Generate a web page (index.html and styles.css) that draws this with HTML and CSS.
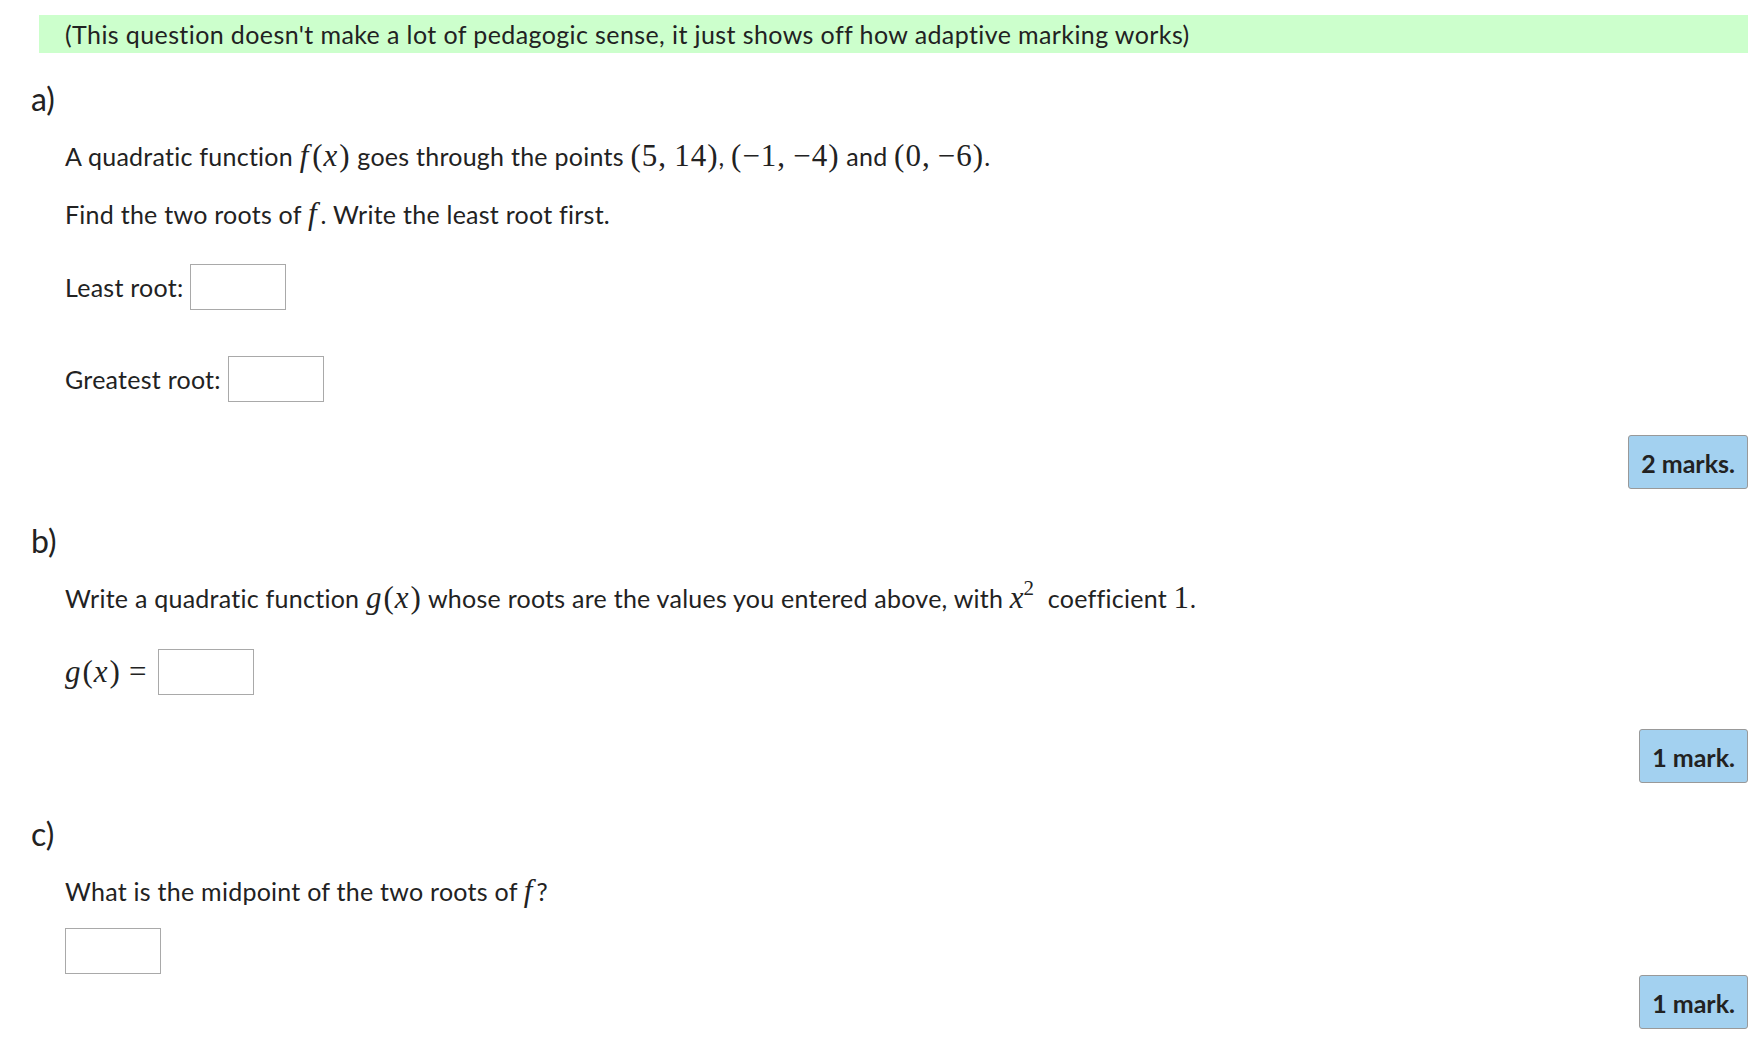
FILE: index.html
```html
<!DOCTYPE html>
<html>
<head>
<meta charset="utf-8">
<link rel="stylesheet" href="styles.css">
</head>
<body>
<div class="page">
  <div class="intro">(This question doesn't make a lot of pedagogic sense, it just shows off how adaptive marking works)</div>

  <section class="part part-a">
    <div class="part-label">a)</div>
    <div class="content">
      <p class="line">A quadratic function <span class="m"><i class="f">f</i>(<i>x</i>)</span> goes through the points <span class="m">(5,&#8201;14)</span>, <span class="m">(−1,&#8201;−4)</span> and <span class="m">(0,&#8201;−6)</span>.</p>
      <p class="line l2">Find the two roots of <span class="m"><i class="f">f</i></span>. Write the least root first.</p>
      <div class="answer first">Least root: <span class="box"></span></div>
      <div class="answer second">Greatest root: <span class="box"></span></div>
    </div>
    <div class="marks-row"><span class="marks">2 marks.</span></div>
  </section>

  <section class="part part-b">
    <div class="part-label">b)</div>
    <div class="content">
      <p class="line">Write a quadratic function <span class="m"><i>g</i>(<i>x</i>)</span> whose roots are the values you entered above, with <span class="m"><i class="base">x</i><sup>2</sup></span> coefficient <span class="m">1</span>.</p>
      <div class="answer first"><span class="m"><i>g</i>(<i>x</i>)<span class="eq">=</span></span><span class="box"></span></div>
    </div>
    <div class="marks-row"><span class="marks">1 mark.</span></div>
  </section>

  <section class="part part-c">
    <div class="part-label">c)</div>
    <div class="content">
      <p class="line">What is the midpoint of the two roots of <span class="m"><i class="f">f</i></span>?</p>
      <div class="answer c-box"><span class="box"></span></div>
    </div>
    <div class="marks-row tight"><span class="marks">1 mark.</span></div>
  </section>
</div>
</body>
</html>
```

FILE: styles.css
```css
html, body {
  margin: 0;
  padding: 0;
  background: #ffffff;
}
body {
  font-family: "Lato", "Open Sans", sans-serif;
  color: #222222;
  font-size: 25px;
  letter-spacing: 0.25px;
}
.page {
  padding: 15px 15px 0 31px;
}
.intro {
  margin-left: 8px;
  height: 38px;
  line-height: 38px;
  background: #ccffcc;
  padding-left: 26px;
  white-space: nowrap;
  letter-spacing: 0.4px;
}
.part-label {
  font-size: 32px;
  line-height: 36px;
  height: 36px;
  letter-spacing: 0;
}
.part-a .part-label { margin-top: 28px; }
.part-b .part-label { margin-top: 34px; }
.part-c .part-label { margin-top: 33px; }
.content {
  padding-left: 34px;
}
.line {
  margin: 21px 0 0 0;
  line-height: 36px;
  height: 36px;
  white-space: nowrap;
}
.line.l2 { margin-top: 22px; }
.m {
  font-family: "Liberation Serif", "DejaVu Serif", serif;
  font-size: 31px;
  letter-spacing: 1px;
}
.m i { font-style: italic; margin-right: 1px; }
.m i.f { margin-right: 3px; }
.m i.base { margin-right: 0; letter-spacing: 0; }
.m sup {
  font-size: 21px;
  line-height: 0;
  vertical-align: 13px;
  margin-right: 6px;
}
.answer {
  display: flex;
  align-items: center;
  gap: 7px;
  height: 46px;
  white-space: nowrap;
}
.answer.first { margin-top: 32px; }
.part-b .answer.first { margin-top: 33px; }
.answer.second { margin-top: 46px; }
.answer.c-box { margin-top: 19px; }
.box {
  display: inline-block;
  width: 94px;
  height: 44px;
  border: 1px solid #a9a9a9;
  background: #fff;
}
.eq { margin: 0 4px 0 8px; }
.marks-row {
  display: flex;
  justify-content: flex-end;
  margin-top: 33px;
}
.part-b .marks-row { margin-top: 34px; }
.marks-row.tight { margin-top: 1px; }
.marks {
  display: inline-block;
  height: 52px;
  line-height: 54px;
  padding: 0 12px;
  background: #a3d1f0;
  border: 1px solid #999999;
  border-radius: 3px;
  font-size: 25px;
  font-weight: 700;
  letter-spacing: 0;
}
```
